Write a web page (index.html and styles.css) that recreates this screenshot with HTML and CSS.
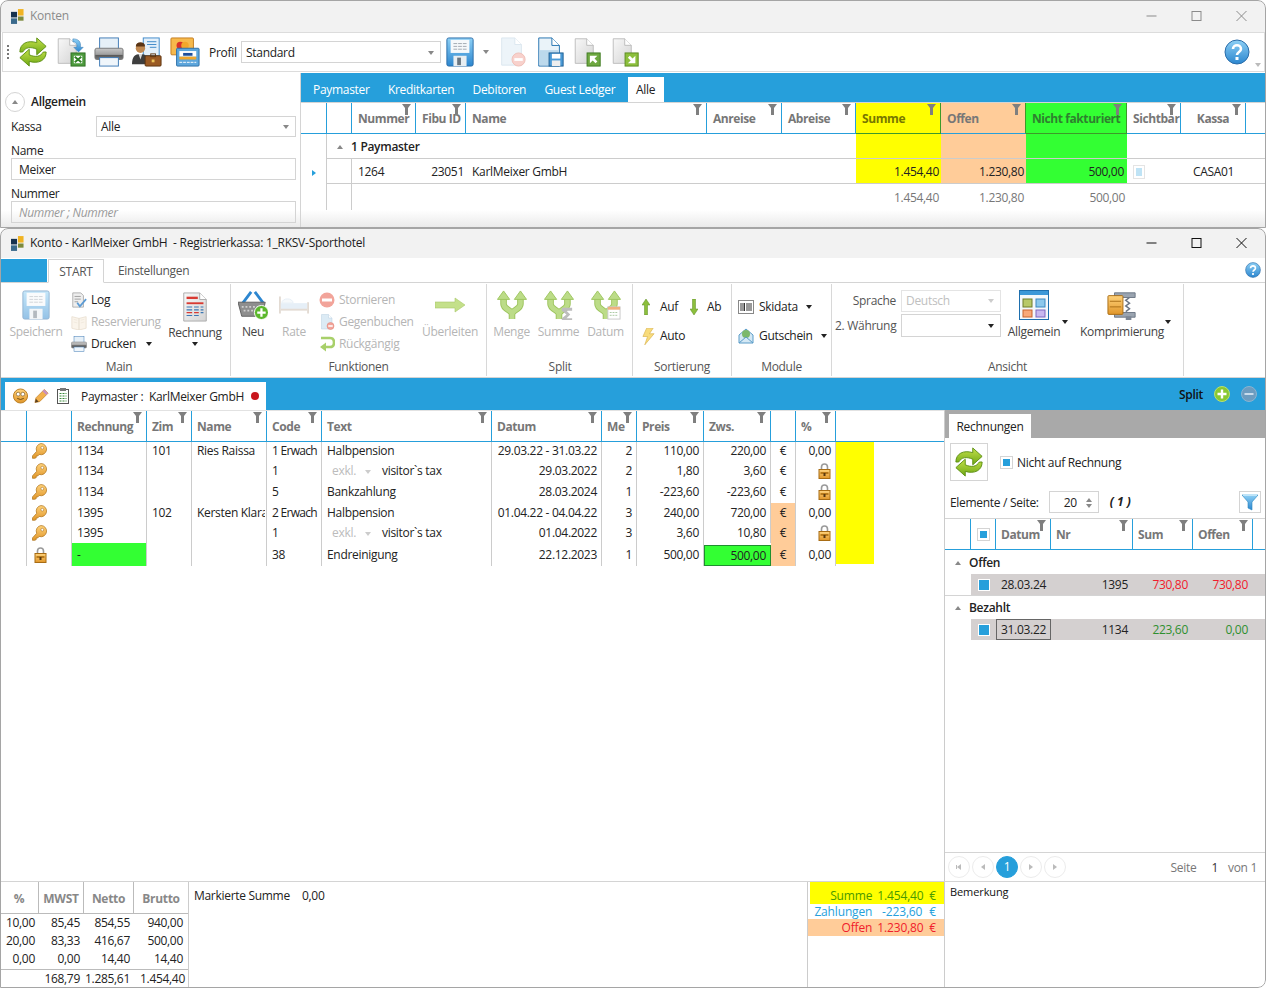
FILE: index.html
```html
<!DOCTYPE html>
<html lang="de">
<head>
<meta charset="utf-8">
<title>Konten</title>
<link rel="stylesheet" href="styles.css">
</head>
<body>
<svg class="defs" aria-hidden="true">
  <defs>
    <linearGradient id="g-green" x1="0" y1="0" x2="0" y2="1"><stop offset="0" stop-color="#c4e04a"/><stop offset="1" stop-color="#6ea815"/></linearGradient>
    <linearGradient id="g-page" x1="0" y1="0" x2="1" y2="1"><stop offset="0" stop-color="#f8f8f8"/><stop offset="1" stop-color="#d4d4d4"/></linearGradient>
    <linearGradient id="g-blue" x1="0" y1="0" x2="0" y2="1"><stop offset="0" stop-color="#8ed0f5"/><stop offset="1" stop-color="#2b86cf"/></linearGradient>
    <linearGradient id="g-gold" x1="0" y1="0" x2="0" y2="1"><stop offset="0" stop-color="#ffd27a"/><stop offset="1" stop-color="#e0962a"/></linearGradient>
    <linearGradient id="g-body" x1="0" y1="0" x2="0" y2="1"><stop offset="0" stop-color="#c8c8c8"/><stop offset=".55" stop-color="#a0a0a0"/><stop offset=".6" stop-color="#585858"/><stop offset="1" stop-color="#7a7a7a"/></linearGradient>
    <symbol id="logo" viewBox="0 0 14 16"><rect x="7.500" y="0" width="6" height="7" fill="#f0b323"/><rect x="0" y="3" width="6.500" height="6" fill="#16324f"/><rect x="7.500" y="8" width="6" height="4.500" fill="#7d8a3c"/><rect x="0" y="10" width="6.500" height="6" fill="#3a6a8c"/></symbol>
    <symbol id="refresh" viewBox="1 0 30 32"><path d="M2 16C2 7 10 3 20 6V1l10 9-10 9v-6C13 10 8 11 5 16Z" fill="url(#g-green)" stroke="#5c8f12"/><path d="M30 16c0 9-8 13-18 10v5L2 22l10-9v6c7 3 12 2 15-3Z" fill="url(#g-green)" stroke="#5c8f12"/></symbol>
    <symbol id="page" viewBox="0 0 32 32"><path d="M5 1h14l8 8v22H5z" fill="url(#g-page)" stroke="#b4b4b4"/><path d="M19 1v8h8" fill="#fff" stroke="#b4b4b4"/></symbol>
    <symbol id="excel" viewBox="0 0 32 32"><use href="#page" width="28" height="30" x="-2"/><path d="M18 2c6 0 9 3 8 9h3l-5 5-5-5h3c1-3-1-6-4-6z" fill="url(#g-blue)" stroke="#3a7fb5" stroke-width=".6"/><rect x="16" y="17" width="15" height="14" fill="#4c9a3c" stroke="#2f6f25"/><rect x="19" y="20" width="9" height="8" fill="#fff"/><path d="M20 21l7 6M27 21l-7 6" stroke="#2f7f25" stroke-width="2"/></symbol>
    <symbol id="printer" viewBox="0 0 32 32"><rect x="6" y="1" width="20" height="12" fill="#e6f0f8" stroke="#3c78b4"/><rect x="1" y="12" width="30" height="12" rx="2" fill="url(#g-body)" stroke="#7a7a7a"/><rect x="6" y="22" width="20" height="9" fill="#f0f6fb" stroke="#3c78b4"/></symbol>
    <symbol id="person" viewBox="0 0 32 32"><rect x="12" y="1" width="17" height="19" fill="#e4f0fa" stroke="#3c88c8"/><path d="M16 5h10M16 8h10M19 11h7" stroke="#3c88c8"/><circle cx="9" cy="12" r="5" fill="#c08850"/><path d="M4 10c0-6 10-6 10 0z" fill="#5a3414"/><path d="M0 29c0-8 3-11 9-11s9 3 9 8v3z" fill="#3e3e3e"/><path d="M7 18l2 6 2-6z" fill="#dcdcdc"/><rect x="14" y="20" width="17" height="11" rx="1" fill="#9a5a24" stroke="#5d3410"/><rect x="20" y="18" width="5" height="3" fill="none" stroke="#5d3410"/><rect x="21" y="24" width="3" height="3" fill="#ecc35a"/></symbol>
    <symbol id="cards" viewBox="0 0 32 32"><rect x="1" y="1" width="24" height="18" rx="1" fill="#f6b94c" stroke="#c27b1e"/><circle cx="11" cy="9" r="4" fill="#d8322a"/><circle cx="16" cy="9" r="4" fill="#f2a72b"/><rect x="7" y="12" width="24" height="19" rx="1" fill="#5da6dc" stroke="#2c6ea6"/><rect x="10" y="15" width="18" height="6" fill="#fff"/><rect x="14" y="17" width="10" height="3" fill="#1e4f9c"/><rect x="10" y="21" width="18" height="3" fill="#f2a72b"/><path d="M10 27h18" stroke="#fff" stroke-dasharray="3 1"/></symbol>
    <symbol id="floppy" viewBox="0 0 32 32"><path d="M2 3q0-2 2-2h24q2 0 2 2v26q0 2-2 2H4q-2 0-2-2z" fill="url(#g-blue)" stroke="#2a6ca8"/><rect x="6" y="3" width="20" height="14" fill="#f6f9fb"/><path d="M9 7h14M9 10h14M9 13h14" stroke="#a0a8b0" stroke-dasharray="4 1"/><rect x="9" y="20" width="14" height="11" fill="#e8eef2"/><rect x="13" y="22" width="4" height="8" fill="#6a7680"/></symbol>
    <symbol id="doc-minus" viewBox="0 0 32 32"><path d="M5 1h14l7 7v22H5z" fill="#dcebf5" stroke="#b9cfe0"/><path d="M19 1v7h7" fill="#fff" stroke="#b9cfe0"/><circle cx="23" cy="24" r="7" fill="#f2a49a" stroke="#e08070"/><rect x="18.500" y="22.500" width="9" height="3" fill="#fff"/></symbol>
    <symbol id="doc-save" viewBox="0 0 32 32"><path d="M4 1h14l8 8v22H4z" fill="#eaf3f9" stroke="#1e6fae"/><path d="M18 1v8h8" fill="#fff" stroke="#1e6fae"/><rect x="5" y="14" width="20" height="16" fill="#bcd9ec"/><rect x="15" y="17" width="15" height="14" fill="#4a9ad6" stroke="#1f5f92"/><rect x="18" y="18" width="9" height="5" fill="#fff"/><rect x="18" y="25" width="9" height="6" fill="#eee"/></symbol>
    <symbol id="doc-in" viewBox="0 0 32 32"><use href="#page" width="28" height="30" x="-2"/><rect x="15" y="17" width="14" height="14" fill="#6ea840" stroke="#3f7a20"/><path d="M18 28v-8h8l-3 3 3 3-2 2-3-3z" fill="#fff"/></symbol>
    <symbol id="doc-out" viewBox="0 0 32 32"><use href="#page" width="28" height="30" x="-2"/><rect x="15" y="17" width="14" height="14" fill="#8cbf3c" stroke="#5a8a20"/><path d="M26 28v-8l-3 3-3-3-2 2 3 3-3 3z" fill="#fff"/></symbol>
    <symbol id="help" viewBox="0 0 26 26"><circle cx="13" cy="13" r="12" fill="url(#g-blue)" stroke="#2a6ca8"/><path d="M9 10c0-5 8-5 8 0 0 3-4 3-4 6" fill="none" stroke="#fff" stroke-width="2.600"/><rect x="11.500" y="18" width="3" height="3" fill="#fff"/></symbol>
    <symbol id="funnel" viewBox="0 0 9 11"><path d="M0 0h9L6 4v7H3V4z" fill="#7f7f7f"/></symbol>
    <symbol id="log" viewBox="0 0 18 18"><path d="M2 1h9l3 3v13H2z" fill="#eee" stroke="#aaa"/><path d="M4 5h7M4 8h7M4 11h4" stroke="#999"/><path d="M7 12l3 4 7-8" fill="none" stroke="#5b9bd5" stroke-width="2"/></symbol>
    <symbol id="book" viewBox="0 0 18 18"><path d="M1 3l8 2 8-2v13l-8 2-8-2z" fill="#f6ead8" stroke="#d8c4a8"/><path d="M9 5v13" stroke="#c8b498"/><path d="M3 6l4 1M3 9l4 1M11 7l4-1M11 10l4-1" stroke="#e4d4bc"/></symbol>
    <symbol id="invoice" viewBox="0 0 28 32"><path d="M2 1h17l7 7v23H2z" fill="url(#g-page)" stroke="#aaa"/><path d="M19 1v7h7" fill="#fff" stroke="#aaa"/><rect x="5" y="5" width="12" height="2.500" fill="#d83a32"/><rect x="5" y="11" width="18" height="2" fill="#d83a32"/><path d="M5 16h6M13 16h5M20 16h3M5 19h6M13 19h5M20 19h3" stroke="#3c78b4" stroke-width="1.200"/><path d="M5 22h6M13 22h5" stroke="#d83a32" stroke-width="1.200"/><path d="M20 22h3M5 25h6M13 25h5" stroke="#3c78b4" stroke-width="1.200"/></symbol>
    <symbol id="basket" viewBox="0 0 32 32"><path d="M5 14L14 2M27 14L18 2" stroke="#2c86d0" stroke-width="3" fill="none"/><path d="M0 13h29l-3 15H4z" fill="#8e8e8e" stroke="#5e5e5e"/><path d="M4 18h22M6 22h18" stroke="#d0d0d0" stroke-dasharray="2 2" stroke-width="2"/><circle cx="25" cy="24" r="7.500" fill="#5cb82c" stroke="#fff"/><path d="M25 19.500v9M20.500 24h9" stroke="#fff" stroke-width="2.400"/></symbol>
    <symbol id="bed" viewBox="0 0 32 20"><path d="M1 1v18M31 7v12" stroke="#c9b8a8" stroke-width="2"/><path d="M2 8h28v7H2z" fill="#cfe0f0"/><path d="M3 8c0-6 12-6 12 0z" fill="#eef4f8" stroke="#cfe0f0"/><path d="M2 15h28" stroke="#c9b8a8" stroke-width="2"/></symbol>
    <symbol id="stop" viewBox="0 0 16 16"><circle cx="8" cy="8" r="7.500" fill="#f2a49a"/><rect x="3" y="6.500" width="10" height="3" fill="#fff"/></symbol>
    <symbol id="undo" viewBox="0 0 16 16"><path d="M2 2h9q4 0 4 4.500T11 11H6" fill="none" stroke="#a8d06a" stroke-width="2.600"/><path d="M7 6.500L1 11l6 4.500z" fill="#a8d06a"/></symbol>
    <symbol id="right" viewBox="0 0 30 14"><path d="M0 4h20V0l10 7-10 7v-4H0z" fill="#c4e08a" stroke="#a8c86a" stroke-width=".6"/></symbol>
    <symbol id="fork" viewBox="0 0 32 32"><path d="M7 9v6c0 6 9 6 9 11v5M25 9v6c0 6-9 6-9 11v5" fill="none" stroke="#9cc45c" stroke-width="7"/><path d="M7 9v6c0 6 9 6 9 11v5M25 9v6c0 6-9 6-9 11v5" fill="none" stroke="#bcdc88" stroke-width="5"/><path d="M.500 10L7 1l6.500 9zM18.500 10L25 1l6.500 9z" fill="#bcdc88" stroke="#9cc45c"/></symbol>
    <symbol id="up" viewBox="0 0 8 16"><path d="M4 0l4 6H5.500v10h-3V6H0z" fill="#8cbf3c" stroke="#5a8a20" stroke-width=".5"/></symbol>
    <symbol id="down" viewBox="0 0 8 16"><path d="M4 16l4-6H5.500V0h-3v10H0z" fill="#8cbf3c" stroke="#5a8a20" stroke-width=".5"/></symbol>
    <symbol id="bolt" viewBox="0 0 14 18"><path d="M5 0h7L8 6h5L3 18l3-9H1z" fill="#f8dc7c" stroke="#d8b24c" stroke-width=".7"/></symbol>
    <symbol id="barcode" viewBox="0 0 16 16"><rect x=".500" y="1.500" width="15" height="13" fill="#fff" stroke="#888"/><path d="M3 4v8M5 4v8M6.500 4v8M9 4v8M11 4v8M13 4v8" stroke="#333"/></symbol>
    <symbol id="mail" viewBox="0 0 16 16"><path d="M1 7l7-6 7 6v8H1z" fill="#d4e8f4" stroke="#5a9cc8"/><circle cx="8" cy="6" r="4" fill="#7cb86a"/><path d="M1 15l7-6 7 6" fill="none" stroke="#5a9cc8"/></symbol>
    <symbol id="layout" viewBox="0 0 30 30"><rect x=".500" y=".500" width="29" height="29" fill="#f4f8fb" stroke="#1e6fae"/><rect x="1" y="1" width="28" height="4" fill="#3c98d8"/><rect x="4" y="9" width="9" height="8" fill="#b8c868" stroke="#6e7c2c"/><rect x="17" y="9" width="9" height="8" fill="#8cc8ec" stroke="#3c88c0"/><rect x="4" y="20" width="9" height="7" fill="#f8a878" stroke="#c8642c"/><rect x="17" y="20" width="9" height="7" fill="#c8b8f0" stroke="#7c68c0"/></symbol>
    <symbol id="clamp" viewBox="0 0 32 32"><path d="M8 3h22v5H8zM8 24h22v5H8z" fill="#9aa4b0" stroke="#6c7684"/><path d="M24 8l-4 3 4 3-4 3 4 3-4 3" fill="none" stroke="#6c7684" stroke-width="1.600"/><rect x="1" y="6" width="16" height="20" rx="1" fill="url(#g-gold)" stroke="#a86c14"/><path d="M3 12h12M3 18h12" stroke="#a86c14"/><rect x="20" y="28" width="6" height="4" fill="#7c8694"/></symbol>
    <symbol id="smiley" viewBox="0 0 16 16"><circle cx="8" cy="8" r="7.500" fill="url(#g-gold)" stroke="#b87a1c"/><circle cx="5.500" cy="6" r="2" fill="#fff" stroke="#6a4a10" stroke-width=".6"/><circle cx="10.500" cy="6" r="2" fill="#fff" stroke="#6a4a10" stroke-width=".6"/><path d="M4.500 10.500q3.500 2.500 7 0" fill="none" stroke="#6a4a10"/></symbol>
    <symbol id="pencil" viewBox="0 0 16 16"><path d="M1 15l1-5L11 1l4 4-9 9z" fill="#f2b04c" stroke="#c07c20" stroke-width=".7"/><path d="M11 1l4 4-2 2-4-4z" fill="#c890c0"/><path d="M1 15l1-4 3 3z" fill="#5a4020"/></symbol>
    <symbol id="clip" viewBox="0 0 12 16"><rect x=".500" y="1.500" width="11" height="14" fill="#fff" stroke="#555"/><rect x="3" y="0" width="6" height="3" fill="#777"/><path d="M2.500 5.500h7M2.500 8h7M2.500 10.500h7M2.500 13h7" stroke="#3a8a3a" stroke-dasharray="2 1"/></symbol>
    <symbol id="key" viewBox="0 0 16 16"><path d="M9.500 0a6 6 0 1 1-1.800 11.700L6 13.400H4.500V15L3 15.800H.500v-2.600L5 8.300A6 6 0 0 1 9.500 0z" fill="url(#g-gold)" stroke="#a86c14" stroke-width=".7"/><circle cx="11" cy="4.500" r="1.500" fill="#fff" stroke="#a86c14" stroke-width=".6"/></symbol>
    <symbol id="lock" viewBox="0 0 12 16"><path d="M3 7V4q0-3 3-3t3 3v3" fill="none" stroke="#9a9a9a" stroke-width="1.600"/><rect x=".500" y="6.500" width="11" height="9" fill="url(#g-gold)" stroke="#a86c14"/><rect x="2" y="9" width="8" height="2" fill="#b87a1c"/><rect x="5" y="10" width="2" height="3" fill="#5a3a10"/></symbol>
    <symbol id="filter" viewBox="0 0 16 18"><path d="M0 2h16L10 9v8l-4-2V9z" fill="url(#g-blue)" stroke="#2a86c0" stroke-width=".6"/><path d="M1 2h14" stroke="#bfe4f8" stroke-width="2"/></symbol>
    <symbol id="plus" viewBox="0 0 16 16"><circle cx="8" cy="8" r="7.500" fill="#8ac832" stroke="#b8e070"/><path d="M8 3.500v9M3.500 8h9" stroke="#fff" stroke-width="2.400"/></symbol>
    <symbol id="minus" viewBox="0 0 16 16"><circle cx="8" cy="8" r="7.500" fill="#6c9cc0" stroke="#8ab4d0"/><rect x="3.500" y="7" width="9" height="2" fill="#c8dcec"/></symbol>
  </defs>
</svg>

<section class="win win-back">
  <header class="titlebar inactive">
    <svg class="logo"><use href="#logo"/></svg>
    <span class="title">Konten</span>
    <div class="winbtns">
      <svg class="wb" viewBox="0 0 10 10"><path d="M0 5h10"/></svg>
      <svg class="wb" viewBox="0 0 10 10"><rect x=".500" y=".500" width="9" height="9"/></svg>
      <svg class="wb" viewBox="0 0 10 10"><path d="M0 0l10 10M10 0L0 10"/></svg>
    </div>
  </header>
  <div class="toolbar">
    <span class="grip"></span>
    <svg class="tb-ic"><use href="#refresh"/></svg>
    <svg class="tb-ic"><use href="#excel"/></svg>
    <svg class="tb-ic"><use href="#printer"/></svg>
    <svg class="tb-ic"><use href="#person"/></svg>
    <svg class="tb-ic"><use href="#cards"/></svg>
    <span class="tb-label">Profil</span>
    <div class="combo tb-combo"><span>Standard</span><i class="caret grey"></i></div>
    <svg class="tb-ic tb-save"><use href="#floppy"/></svg>
    <i class="caret grey"></i>
    <svg class="tb-ic dim"><use href="#doc-minus"/></svg>
    <svg class="tb-ic"><use href="#doc-save"/></svg>
    <svg class="tb-ic"><use href="#doc-in"/></svg>
    <svg class="tb-ic"><use href="#doc-out"/></svg>
    <svg class="tb-help"><use href="#help"/></svg>
    <i class="caret tiny"></i>
  </div>
  <div class="back-body">
    <aside class="filters">
      <div class="section"><span class="circle"><i class="tri-up"></i></span><span class="sec-title">Allgemein</span></div>
      <div class="kassa"><span class="kassa-l">Kassa</span><div class="combo grow"><span>Alle</span><i class="caret grey"></i></div></div>
      <label class="f-label">Name</label>
      <div class="input">Meixer</div>
      <label class="f-label f-label-b">Nummer</label>
      <div class="input ph">Nummer ; Nummer</div>
    </aside>
    <div class="accounts">
      <nav class="bluetabs">
        <span class="bt">Paymaster</span>
        <span class="bt">Kreditkarten</span>
        <span class="bt">Debitoren</span>
        <span class="bt">Guest Ledger</span>
        <span class="bt on">Alle</span>
      </nav>
      <div class="grid kgrid">
        <div class="h"></div>
        <div class="h"></div>
        <div class="h">Nummer<svg class="fn"><use href="#funnel"/></svg></div>
        <div class="h">Fibu ID<svg class="fn"><use href="#funnel"/></svg></div>
        <div class="h">Name<svg class="fn"><use href="#funnel"/></svg></div>
        <div class="h">Anreise<svg class="fn"><use href="#funnel"/></svg></div>
        <div class="h">Abreise<svg class="fn"><use href="#funnel"/></svg></div>
        <div class="h hy">Summe<svg class="fn"><use href="#funnel"/></svg></div>
        <div class="h ho">Offen<svg class="fn"><use href="#funnel"/></svg></div>
        <div class="h hg">Nicht fakturiert<svg class="fn"><use href="#funnel"/></svg></div>
        <div class="h">Sichtbar<svg class="fn"><use href="#funnel"/></svg></div>
        <div class="h hc">Kassa<svg class="fn"><use href="#funnel"/></svg></div>
        <div class="h none"></div>

        <div class="c bl"></div>
        <div class="c grp-k span6"><i class="tri-up"></i><b>1 Paymaster</b></div>
        <div class="c yellow lb"></div>
        <div class="c orange lb"></div>
        <div class="c green lb"></div>
        <div class="c none lb span3"></div>

        <div class="c bl ctr"><i class="tri-right"></i></div>
        <div class="c bl lb"></div>
        <div class="c lb">1264</div>
        <div class="c lb r">23051</div>
        <div class="c lb">KarlMeixer GmbH</div>
        <div class="c lb"></div>
        <div class="c lb"></div>
        <div class="c yellow r lb">1.454,40</div>
        <div class="c orange r lb">1.230,80</div>
        <div class="c green r lb">500,00</div>
        <div class="c lb"><span class="vis"></span></div>
        <div class="c lb ctr">CASA01</div>
        <div class="c lb"></div>

        <div class="c bl"></div>
        <div class="c bl"></div>
        <div class="c span5"></div>
        <div class="c r sum">1.454,40</div>
        <div class="c r sum">1.230,80</div>
        <div class="c r sum">500,00</div>
        <div class="c span3"></div>
      </div>
    </div>
  </div>
</section>

<section class="win win-front">
  <header class="titlebar">
    <svg class="logo"><use href="#logo"/></svg>
    <span class="title">Konto - KarlMeixer GmbH&nbsp; - Registrierkassa: 1_RKSV-Sporthotel</span>
    <div class="winbtns">
      <svg class="wb" viewBox="0 0 10 10"><path d="M0 5h10"/></svg>
      <svg class="wb" viewBox="0 0 10 10"><rect x=".500" y=".500" width="9" height="9"/></svg>
      <svg class="wb" viewBox="0 0 10 10"><path d="M0 0l10 10M10 0L0 10"/></svg>
    </div>
  </header>
  <div class="rtabs">
    <span class="app"></span>
    <span class="rt on">START</span>
    <span class="rt">Einstellungen</span>
    <svg class="rhelp"><use href="#help"/></svg>
  </div>
  <div class="ribbon">
    <div class="rg rg-main">
      <div class="rc">
        <div class="big b-save dis"><svg class="bi dim"><use href="#floppy"/></svg><span>Speichern</span></div>
        <div class="smalls s-main">
          <div class="sm"><svg class="si"><use href="#log"/></svg><span>Log</span></div>
          <div class="sm dis"><svg class="si dim"><use href="#book"/></svg><span>Reservierung</span></div>
          <div class="sm"><svg class="si"><use href="#printer"/></svg><span>Drucken</span><i class="caret dark ml"></i></div>
        </div>
        <div class="big b-inv"><svg class="bi"><use href="#invoice"/></svg><span>Rechnung</span><i class="caret dark"></i></div>
      </div>
      <div class="rl">Main</div>
    </div>
    <div class="rg rg-fn">
      <div class="rc">
        <div class="big b-neu"><svg class="bi"><use href="#basket"/></svg><span>Neu</span></div>
        <div class="big b-rate dis"><svg class="bi dim"><use href="#bed"/></svg><span>Rate</span></div>
        <div class="smalls s-fn">
          <div class="sm dis"><svg class="si"><use href="#stop"/></svg><span>Stornieren</span></div>
          <div class="sm dis"><svg class="si"><use href="#doc-minus"/></svg><span>Gegenbuchen</span></div>
          <div class="sm dis"><svg class="si"><use href="#undo"/></svg><span>Rückgängig</span></div>
        </div>
        <div class="big b-ub dis"><svg class="bi"><use href="#right"/></svg><span>Überleiten</span></div>
      </div>
      <div class="rl">Funktionen</div>
    </div>
    <div class="rg rg-split">
      <div class="rc">
        <div class="big b-fork dis"><svg class="bi"><use href="#fork"/></svg><span>Menge</span></div>
        <div class="big b-fork dis"><svg class="bi" viewBox="0 0 32 32"><use href="#fork" width="32" height="32"/><path d="M19 19h11v3h-6l4 4-4 4h6v2H19v-2l5-4-5-4z" fill="#bdbdbd"/></svg><span>Summe</span></div>
        <div class="big b-fork dis"><svg class="bi" viewBox="0 0 32 32"><use href="#fork" width="32" height="32"/><rect x="18" y="18" width="13" height="13" fill="#fff" stroke="#c8c8c8"/><rect x="18" y="18" width="13" height="3" fill="#f0b080"/><path d="M20 24h9M20 27h9" stroke="#a8c8a0" stroke-dasharray="2 1"/></svg><span>Datum</span></div>
      </div>
      <div class="rl">Split</div>
    </div>
    <div class="rg rg-sort">
      <div class="rc sort">
        <div class="sort-row"><svg class="arr"><use href="#up"/></svg><span class="sort-t">Auf</span><svg class="arr arr-d"><use href="#down"/></svg><span>Ab</span></div>
        <div class="sort-row"><svg class="bolt"><use href="#bolt"/></svg><span>Auto</span></div>
      </div>
      <div class="rl">Sortierung</div>
    </div>
    <div class="rg rg-mod">
      <div class="rc mod">
        <div class="mod-row"><svg class="si"><use href="#barcode"/></svg><span>Skidata</span><i class="caret dark"></i></div>
        <div class="mod-row"><svg class="si"><use href="#mail"/></svg><span>Gutschein</span><i class="caret dark"></i></div>
      </div>
      <div class="rl">Module</div>
    </div>
    <div class="rg rg-view">
      <div class="rc view">
        <div class="langs">
          <div class="lang"><span class="lang-l">Sprache</span><div class="combo lc dis-c"><span>Deutsch</span><i class="caret pale"></i></div></div>
          <div class="lang"><span class="lang-l">2. Währung</span><div class="combo lc lc2"><span></span><i class="caret dark"></i></div></div>
        </div>
        <div class="big b-all"><svg class="bi"><use href="#layout"/></svg><span>Allgemein</span><i class="caret dark cx"></i></div>
        <div class="big b-komp"><svg class="bi"><use href="#clamp"/></svg><span>Komprimierung</span><i class="caret dark cx"></i></div>
      </div>
      <div class="rl">Ansicht</div>
    </div>
  </div>
  <div class="bluebar">
    <div class="doc-tab">
      <svg class="dt-ic"><use href="#smiley"/></svg>
      <svg class="dt-ic"><use href="#pencil"/></svg>
      <svg class="dt-ic dt-clip"><use href="#clip"/></svg>
      <span class="dt-text">Paymaster :&nbsp; KarlMeixer GmbH</span>
      <i class="dot"></i>
    </div>
    <div class="bar-right">
      <span class="split-l">Split</span>
      <svg class="pm"><use href="#plus"/></svg>
      <svg class="pm pm-m"><use href="#minus"/></svg>
    </div>
  </div>

  <div class="mainrow">
    <div class="grid mgrid">
      <div class="h"></div><div class="h"></div>
      <div class="h">Rechnung<svg class="fn"><use href="#funnel"/></svg></div>
      <div class="h">Zim<svg class="fn"><use href="#funnel"/></svg></div>
      <div class="h">Name<svg class="fn"><use href="#funnel"/></svg></div>
      <div class="h">Code<svg class="fn"><use href="#funnel"/></svg></div>
      <div class="h">Text<svg class="fn"><use href="#funnel"/></svg></div>
      <div class="h">Datum<svg class="fn"><use href="#funnel"/></svg></div>
      <div class="h">Me<svg class="fn"><use href="#funnel"/></svg></div>
      <div class="h">Preis<svg class="fn"><use href="#funnel"/></svg></div>
      <div class="h">Zws.<svg class="fn"><use href="#funnel"/></svg></div>
      <div class="h"></div>
      <div class="h">%<svg class="fn"><use href="#funnel"/></svg></div>
      <div class="h none span2"></div>

      <div class="c bl"></div><div class="c bl"><svg class="key"><use href="#key"/></svg></div><div class="c bl">1134</div><div class="c bl">101</div><div class="c bl">Ries Raissa</div><div class="c bl cod">1 Erwach</div><div class="c bl">Halbpension</div><div class="c bl r">29.03.22 - 31.03.22</div><div class="c bl r">2</div><div class="c bl r">110,00</div><div class="c bl r">220,00</div><div class="c bl ctr">€</div><div class="c bl r">0,00</div><div class="c yellow first"></div><div class="c"></div>

      <div class="c bl"></div><div class="c bl"><svg class="key"><use href="#key"/></svg></div><div class="c bl">1134</div><div class="c bl"></div><div class="c bl"></div><div class="c bl">1</div><div class="c bl"><span class="exkl">exkl.</span><i class="caret pale"></i><span class="vt">visitor`s tax</span></div><div class="c bl r">29.03.2022</div><div class="c bl r">2</div><div class="c bl r">1,80</div><div class="c bl r">3,60</div><div class="c bl ctr">€</div><div class="c bl r"><svg class="lock"><use href="#lock"/></svg></div><div class="c yellow"></div><div class="c"></div>

      <div class="c bl"></div><div class="c bl"><svg class="key"><use href="#key"/></svg></div><div class="c bl">1134</div><div class="c bl"></div><div class="c bl"></div><div class="c bl">5</div><div class="c bl">Bankzahlung</div><div class="c bl r">28.03.2024</div><div class="c bl r">1</div><div class="c bl r">-223,60</div><div class="c bl r">-223,60</div><div class="c bl ctr">€</div><div class="c bl r"><svg class="lock"><use href="#lock"/></svg></div><div class="c yellow"></div><div class="c"></div>

      <div class="c bl"></div><div class="c bl"><svg class="key"><use href="#key"/></svg></div><div class="c bl">1395</div><div class="c bl">102</div><div class="c bl cl"><span class="clip">Kersten Klara</span></div><div class="c bl cod">2 Erwach</div><div class="c bl">Halbpension</div><div class="c bl r">01.04.22 - 04.04.22</div><div class="c bl r">3</div><div class="c bl r">240,00</div><div class="c bl r">720,00</div><div class="c bl ctr orange">€</div><div class="c bl r">0,00</div><div class="c yellow"></div><div class="c"></div>

      <div class="c bl"></div><div class="c bl"><svg class="key"><use href="#key"/></svg></div><div class="c bl">1395</div><div class="c bl"></div><div class="c bl"></div><div class="c bl">1</div><div class="c bl"><span class="exkl">exkl.</span><i class="caret pale"></i><span class="vt">visitor`s tax</span></div><div class="c bl r">01.04.2022</div><div class="c bl r">3</div><div class="c bl r">3,60</div><div class="c bl r">10,80</div><div class="c bl ctr orange">€</div><div class="c bl r"><svg class="lock"><use href="#lock"/></svg></div><div class="c yellow"></div><div class="c"></div>

      <div class="c bl"></div><div class="c bl"><svg class="lock lock-l"><use href="#lock"/></svg></div><div class="c bl green">-</div><div class="c bl"></div><div class="c bl"></div><div class="c bl">38</div><div class="c bl">Endreinigung</div><div class="c bl r">22.12.2023</div><div class="c bl r">1</div><div class="c bl r">500,00</div><div class="c bl r zws-sel">500,00</div><div class="c bl ctr orange">€</div><div class="c bl r">0,00</div><div class="c yellow last"></div><div class="c"></div>
    </div>

    <aside class="side">
      <div class="side-strip"><span class="side-tab">Rechnungen</span></div>
      <div class="side-top">
        <span class="rf-btn"><svg class="rf"><use href="#refresh"/></svg></span>
        <span class="chk"></span>
        <span class="nar">Nicht auf Rechnung</span>
      </div>
      <div class="side-pg">
        <span class="nar">Elemente / Seite:</span>
        <div class="spin"><span>20</span><span class="spin-a"><i class="tri-up"></i><i class="caret grey"></i></span></div>
        <b class="pgn">( 1 )</b>
        <span class="flt"><svg class="flt-i"><use href="#filter"/></svg></span>
      </div>
      <div class="grid sgrid">
        <div class="h"></div>
        <div class="h ctr"><span class="chk"></span></div>
        <div class="h">Datum<svg class="fn"><use href="#funnel"/></svg></div>
        <div class="h">Nr<svg class="fn"><use href="#funnel"/></svg></div>
        <div class="h">Sum<svg class="fn"><use href="#funnel"/></svg></div>
        <div class="h">Offen<svg class="fn"><use href="#funnel"/></svg></div>
        <div class="h none"></div>

        <div class="c grp-s span7"><i class="tri-up"></i><b>Offen</b></div>
        <div class="c"></div>
        <div class="c gr ctr"><span class="chk-w"></span></div>
        <div class="c gr">28.03.24</div>
        <div class="c gr r">1395</div>
        <div class="c gr r red">730,80</div>
        <div class="c gr r red">730,80</div>
        <div class="c gr"></div>

        <div class="c grp-s span7 tl"><i class="tri-up"></i><b>Bezahlt</b></div>
        <div class="c"></div>
        <div class="c gr ctr"><span class="chk-w"></span></div>
        <div class="c gr foc">31.03.22</div>
        <div class="c gr r">1134</div>
        <div class="c gr r dgreen">223,60</div>
        <div class="c gr r dgreen">0,00</div>
        <div class="c gr"></div>
      </div>
      <div class="pager">
        <span class="pb"><i class="pi first-i"></i></span>
        <span class="pb"><i class="pi prev-i"></i></span>
        <span class="pb cur">1</span>
        <span class="pb"><i class="pi next-i"></i></span>
        <span class="pb"><i class="pi last-i"></i></span>
        <span class="pg-s">Seite</span>
        <span class="pg-n">1</span>
        <span class="pg-s">von 1</span>
      </div>
    </aside>
  </div>

  <footer class="foot">
    <div class="grid vat">
      <div class="vh">%</div><div class="vh">MWST</div><div class="vh">Netto</div><div class="vh">Brutto</div>
      <div class="v">10,00</div><div class="v">85,45</div><div class="v">854,55</div><div class="v">940,00</div>
      <div class="v">20,00</div><div class="v">83,33</div><div class="v">416,67</div><div class="v">500,00</div>
      <div class="v">0,00</div><div class="v">0,00</div><div class="v">14,40</div><div class="v">14,40</div>
      <div class="vt-c"></div><div class="vt-c">168,79</div><div class="vt-c">1.285,61</div><div class="vt-c vt-l">1.454,40</div>
    </div>
    <div class="marked"><span class="m-l">Markierte Summe</span><span>0,00</span></div>
    <div class="totals">
      <div class="tot t-sum"><span>Summe</span><span class="amt">1.454,40</span><span class="eur">€</span></div>
      <div class="tot t-pay"><span>Zahlungen</span><span class="amt">-223,60</span><span class="eur">€</span></div>
      <div class="tot t-off"><span>Offen</span><span class="amt">1.230,80</span><span class="eur">€</span></div>
    </div>
    <div class="note">Bemerkung</div>
  </footer>
</section>
</body>
</html>
```
FILE: styles.css
```css
* { box-sizing: border-box; }
html, body { margin: 0; height: 100%; }
body {
  width: 1266px; height: 988px; overflow: hidden; position: relative; background: #fff;
  font: 12px/16px "Open Sans", "Noto Sans", sans-serif; letter-spacing: -.3px; color: #222;
}
.defs { position: absolute; width: 0; height: 0; }
i { display: block; font-style: normal; }

.win { position: absolute; left: 0; width: 1266px; background: #fff; display: flex; flex-direction: column; overflow: hidden; }
.win::after { content: ""; position: absolute; inset: 0; border: 1px solid #a5a5a5; border-radius: inherit; pointer-events: none; }
.win-back { top: 0; height: 228px; border-radius: 8px 8px 0 0; background: linear-gradient(#fff 210px, #e9e9e9 228px); }
.win-front { top: 228px; height: 760px; border-radius: 8px 8px 8px 0; }

.titlebar { height: 30px; flex: none; background: #f2f2f2; display: flex; align-items: center; padding-left: 11px; color: #1c1c1c; }
.win-back .titlebar { height: 32px; }
.title { letter-spacing: -.25px; }
.logo { width: 13px; height: 15px; margin-right: 6px; }
.inactive { color: #8b8b8b; }
.winbtns { margin-left: auto; display: flex; padding-right: 2px; }
.wb { width: 45px; height: 10px; fill: none; stroke: #111; stroke-width: 1; }
.inactive .wb { stroke: #8b8b8b; }

.caret { width: 0; height: 0; border-left: 3.500px solid transparent; border-right: 3.500px solid transparent; border-top: 4px solid #888; flex: none; }
.caret.dark { border-top-color: #222; }
.caret.pale { border-top-color: #ccc; }
.tri-up { width: 0; height: 0; border-left: 3.500px solid transparent; border-right: 3.500px solid transparent; border-bottom: 4px solid #888; flex: none; }
.tri-right { width: 0; height: 0; border-top: 3.500px solid transparent; border-bottom: 3.500px solid transparent; border-left: 4px solid #269fdb; }
.dim { opacity: .5; }

.toolbar { height: 40px; flex: none; margin: 0 1px 1px 2px; border: 1px solid #dcdcdc; display: flex; align-items: center; gap: 8px; padding-left: 4px; position: relative; }
.grip { width: 2px; height: 14px; margin-right: 1px; background: repeating-linear-gradient(#777 0 2px, transparent 2px 4px); }
.tb-ic { width: 30px; height: 30px; }
.tb-label { width: 24px; white-space: nowrap; margin-left: 1px; padding-top: 1px; }
.combo { height: 21px; border: 1px solid #d4d4d4; display: flex; align-items: center; justify-content: space-between; padding: 1px 6px 0 4px; background: #fff; }
.tb-combo { width: 200px; height: 22px; }
.tb-save { margin-left: -4px; }
.tb-help { width: 26px; height: 26px; margin-left: auto; margin-right: 14px; }
.caret.tiny { position: absolute; right: 3px; bottom: 4px; border-top-color: #bbb; }

.back-body { flex: 1; display: flex; min-height: 0; }
.filters { width: 301px; padding: 19px 4px 0 11px; flex: none; border-right: 1px solid #d4d4d4; }
.section { display: flex; align-items: center; margin-left: -6px; height: 20px; }
.circle { width: 20px; height: 20px; border: 1px solid #d4d4d4; border-radius: 50%; display: flex; align-items: center; justify-content: center; margin-right: 6px; }
.sec-title { font-weight: 600; }
.kassa { display: flex; align-items: center; margin-top: 4px; }
.kassa-l { width: 85px; padding-top: 1px; }
.grow { flex: 1; font-weight: 500; }
.f-label { display: block; height: 15px; margin-top: 6px; line-height: 16px; }
.f-label-b { margin-top: 7px; height: 14px; line-height: 14px; }
.input { height: 22px; border: 1px solid #d4d4d4; padding-left: 7px; line-height: 22px; }
.ph { color: #9a9a9a; font-style: italic; }

.accounts { flex: 1; min-width: 0; }
.bluetabs { height: 29px; background: #269fdb; display: flex; align-items: flex-end; padding-left: 12px; color: #fff; }
.bt { height: 25px; line-height: 26px; margin-right: 18.300px; white-space: nowrap; }
.bt.on { background: #fff; color: #222; width: 36px; text-align: center; margin-left: -6px; }

.grid { display: grid; }
.kgrid { grid-template-columns: 26px 25px 64px 50px 241px 75px 74px 85px 85px 101px 54px 65px 1fr; grid-template-rows: 31px 25px 25px 26px; border-top: 1px solid #d4d4d4; }
.mgrid { flex: 1; align-content: start; min-width: 0; grid-template-columns: 27px 45px 75px 45px 75px 55px 170px 110px 35px 67px 67px 25px 40px 38px 1fr; grid-template-rows: 31px 18px 21px 22px 20px 20px 23px; border-top: 1px solid #e2e2e2; }
.sgrid { grid-template-columns: 26px 25px 55px 82px 60px 60px 1fr; grid-template-rows: 31px 24px 21px 24px 21px; border-top: 1px solid #d4d4d4; }

.h { position: relative; border-right: 1px solid #269fdb; border-bottom: 1px solid #269fdb; font-weight: 700; color: #777; padding: 2px 0 0 5px; display: flex; align-items: center; white-space: nowrap; overflow: hidden; letter-spacing: -.42px; }
.h.none { border-right: 0; }
.h.ctr { justify-content: center; padding: 0; }
.hc { justify-content: center; padding: 2px 0 0; }
.hy { background: #ff0; border-color: #3d9a2a; color: #777700; }
.ho { background: #fc9; border-bottom-color: #269fdb; border-right-color: #3d9a2a; }
.hg { background: #3f3; border-color: #3d9a2a; color: #2f7f2f; }
.fn { position: absolute; right: 4px; top: 1px; width: 9px; height: 11px; }
.kgrid .h { padding-left: 6px; }
.kgrid .hc { padding-left: 0; }

.c { display: flex; align-items: center; padding: 1px 4px 0 5px; white-space: nowrap; min-width: 0; overflow: hidden; }
.r { justify-content: flex-end; }
.ctr { justify-content: center; padding: 1px 0 0; }
.bl { border-right: 1px solid #ccc; }
.lb { border-bottom: 1px solid #ccc; }
.kgrid .c { padding-top: 2px; padding-left: 6px; }
.kgrid .ctr { padding-left: 0; }
.kgrid .r { padding-right: 2px; }
.kgrid .green.r { padding-right: 3px; }
.mgrid .c { padding-top: 0; }
.cod { letter-spacing: -.7px; }
.yellow { background: #ff0; }
.orange { background: #fc9; }
.green { background: #3f3; }
.none { background: transparent; }
.span2 { grid-column: span 2; }
.span3 { grid-column: span 3; }
.span5 { grid-column: span 5; }
.span6 { grid-column: span 6; }
.span7 { grid-column: span 7; }
.kgrid .grp-k { gap: 8px; padding-left: 10px; border-bottom: 1px solid #ccc; }
.grp-k b { font-weight: 600; }
.vis { width: 12px; height: 14px; border: 1px solid #e4e4e4; padding: 2px; background: #bfe3f5 content-box; }
.sum { color: #777; font-weight: 500; }

.rtabs { height: 25px; flex: none; display: flex; align-items: flex-end; border-bottom: 1px solid #d4d4d4; position: relative; background: #fff; }
.app { width: 47px; height: 23px; background: #269fdb; align-self: flex-start; margin-top: 1px; }
.rt { height: 24px; line-height: 23px; padding: 0 10px; color: #555; margin-bottom: -1px; }
.rt.on { width: 56px; margin-left: 1px; padding: 0; text-align: center; border: 1px solid #d4d4d4; border-bottom: 1px solid #fff; background: #fff; margin-right: 4px; }
.rhelp { position: absolute; right: 5px; top: 4px; width: 16px; height: 16px; }

.ribbon { height: 95px; flex: none; display: flex; border-bottom: 1px solid #d4d4d4; }
.rg { flex: none; display: flex; flex-direction: column; margin: 1px 0 1px; border-right: 1px solid #d8d8d8; }
.rc { flex: 1; display: flex; min-height: 0; }
.rl { height: 20px; line-height: 22px; text-align: center; color: #555; flex: none; }
.rg-main { width: 231px; padding-left: 8px; }
.rg-fn { width: 256px; }
.rg-split { width: 146px; padding-left: 1px; }
.rg-sort { width: 99px; }
.rg-mod { width: 100px; }
.rg-view { width: 352px; }
.big { display: flex; flex-direction: column; align-items: center; padding-top: 6px; color: #444; position: relative; white-space: nowrap; }
.bi { width: 30px; height: 30px; margin-bottom: 4px; }
.dis { color: #b5b5b5; }
.b-save { width: 56px; }
.b-inv { width: 54px; margin-left: 6px; padding-top: 8px; }
.b-inv .bi { margin-bottom: 3px; }
.b-inv .caret { margin-top: 1px; }
.smalls { display: flex; flex-direction: column; padding-top: 5px; }
.s-main { width: 91px; margin-left: 7px; }
.sm { height: 22px; flex: none; display: flex; align-items: center; gap: 4px; white-space: nowrap; }
.si { width: 16px; height: 16px; flex: none; }
.ml { margin-left: 6px; }
.b-neu { width: 44px; }
.b-rate { width: 38px; }
.s-fn { width: 102px; margin-left: 6px; }
.b-ub { width: 58px; }
.b-fork { width: 47px; }
.sort { flex-direction: column; padding: 15px 0 0 9px; gap: 13px; }
.sort-row { height: 16px; display: flex; align-items: center; gap: 6px; }
.arr { width: 8px; height: 16px; margin-right: 4px; }
.arr-d { margin: 0 3px 0 5px; }
.sort-t { width: 19px; }
.bolt { width: 13px; height: 17px; margin-right: -1px; }
.mod { flex-direction: column; padding: 15px 0 0 6px; gap: 13px; }
.mod-row { height: 16px; display: flex; align-items: center; gap: 5px; }
.mod-row .caret { margin-left: 3px; }
.view { padding-left: 3px; }
.langs { width: 166px; padding-top: 4px; }
.lang { display: flex; align-items: center; justify-content: space-between; height: 25px; }
.lang-l { flex: 1; text-align: right; padding-right: 5px; white-space: nowrap; color: #555; }
.lang:last-child .lang-l { text-align: left; padding: 0; }
.lc { width: 100px; height: 22px; }
.lc2 { height: 23px; }
.dis-c { color: #c0c0c0; border-color: #e4e4e4; }
.b-all { width: 54px; margin-left: 6px; }
.b-komp { width: 84px; margin-left: 19px; }
.cx { position: absolute; right: -7px; top: 36px; }

.bluebar { height: 32px; flex: none; background: #269fdb; display: flex; align-items: flex-end; padding-left: 5px; }
.doc-tab { width: 261px; height: 28px; background: #fff; display: flex; align-items: center; padding-left: 8px; }
.dt-ic { width: 15px; height: 16px; margin-right: 6px; flex: none; }
.dt-clip { width: 12px; margin-left: 2px; margin-right: 12px; }
.dt-text { white-space: nowrap; flex: 1; padding-top: 2px; }
.dot { width: 8px; height: 8px; border-radius: 50%; background: #c8161d; margin-right: 7px; }
.bar-right { margin-left: auto; align-self: center; display: flex; align-items: center; color: #111; padding-right: 9px; }
.split-l { font-weight: 600; margin-right: 11px; padding-top: 2px; }
.pm { width: 16px; height: 16px; }
.pm-m { margin-left: 11px; }

.mainrow { flex: 1; min-height: 0; display: flex; border-bottom: 1px solid #d4d4d4; }
.key { width: 15px; height: 16px; flex: none; }
.lock { width: 13px; height: 16px; flex: none; }
.lock-l { margin-left: 2px; }
.cl { padding-right: 1px; }
.clip { display: block; overflow: hidden; width: 100%; }
.exkl { color: #bcbcbc; margin-left: 5px; }
.c .caret.pale { margin: 2px 0 0 9px; }
.vt { margin-left: 11px; }
.zws-sel { background: #3f3; border: 1px solid #1f8f2f; margin-top: 2px; }
.first { box-shadow: 0 -1px 0 #3d9a2a; }
.last { margin-bottom: 2px; }

.side { width: 322px; flex: none; border-left: 1px solid #ccc; display: flex; flex-direction: column; }
.side-strip { height: 28px; background: #a9a9a9; padding: 4px 0 0 4px; flex: none; }
.side-tab { display: block; width: 82px; height: 24px; background: #fff; line-height: 26px; text-align: center; }
.side-top { display: flex; align-items: center; padding: 5px 0 0 5px; flex: none; }
.rf-btn { width: 38px; height: 38px; border: 1px solid #d4d4d4; display: flex; align-items: center; justify-content: center; margin-right: 12px; }
.rf { width: 32px; height: 30px; }
.nar { padding-top: 2px; }
.chk { width: 13px; height: 13px; border: 1px solid #d4d4d4; padding: 2px; background: #269fdb content-box; margin-right: 4px; flex: none; }
.h .chk { margin: 0; }
.side-pg { display: flex; align-items: center; height: 22px; margin-top: 10px; padding-left: 5px; flex: none; }
.spin { width: 50px; height: 22px; border: 1px solid #d4d4d4; margin-left: 10px; display: flex; align-items: center; padding: 1px 0 0 14px; font-weight: 500; }
.spin-a { display: flex; flex-direction: column; gap: 2px; margin-left: 9px; }
.pgn { margin-left: 11px; font-style: italic; font-weight: 700; letter-spacing: 0; }
.flt { width: 22px; height: 22px; border: 1px solid #d4d4d4; margin-left: auto; margin-right: 5px; display: flex; align-items: center; justify-content: center; }
.flt-i { width: 16px; height: 18px; }
.sgrid { margin: 5px 1px 0 0; flex: none; }
.sgrid .r { padding-right: 5px; }
.grp-s { gap: 8px; padding-left: 10px; }
.grp-s b { font-weight: 600; }
.tl { border-top: 1px solid #d4d4d4; }
.gr { background: #d4d0d0; }
.chk-w { width: 12px; height: 12px; background: #269fdb; border: 1.500px solid #fff; }
.foc { box-shadow: inset 0 0 0 1px #666; }
.red { color: #f01c2c; }
.dgreen { color: #2f8f2f; }
.pager { margin-top: auto; height: 29px; flex: none; border-top: 1px solid #d4d4d4; display: flex; align-items: center; gap: 2px; padding: 0 9px 0 3px; color: #777; }
.pb { width: 22px; height: 22px; border: 1px solid #ececec; border-radius: 50%; display: flex; align-items: center; justify-content: center; }
.pb.cur { background: #269fdb; color: #fff; border-color: #269fdb; font-weight: 500; }
.pi { width: 0; height: 0; border-top: 3px solid transparent; border-bottom: 3px solid transparent; }
.first-i, .prev-i { border-right: 4px solid #bbb; }
.next-i, .last-i { border-left: 4px solid #bbb; }
.first-i { box-shadow: -2px 0 0 -1px #bbb; }
.pb + .pg-s { margin-left: auto; }
.pg-s { padding-top: 2px; }
.pg-n { margin: 0 8px 0 13px; color: #333; padding-top: 2px; }

.foot { height: 106px; flex: none; display: flex; }
.vat { width: 189px; flex: none; border-right: 1px solid #ccc; grid-template-columns: 39px 45px 50px 54px; grid-template-rows: 32px 18px 18px 19px 19px; }
.vh { border-right: 1px solid #bbb; border-bottom: 1px solid #bbb; font-weight: 700; color: #888; display: flex; align-items: center; justify-content: center; padding-top: 3px; }
.vh:nth-child(4) { border-right: 0; }
.v { text-align: right; padding-right: 4px; line-height: 18px; }
.v:nth-child(4n) { padding-right: 5px; }
.vt-c { border-top: 1px solid #bbb; text-align: right; padding-right: 4px; font-weight: 500; line-height: 18px; white-space: nowrap; }
.vt-l { padding-right: 3px; }
.marked { flex: 1; padding: 6px 0 0 5px; display: flex; }
.m-l { width: 108px; font-weight: 500; }
.totals { width: 138px; flex: none; border-left: 1px solid #ccc; border-right: 1px solid #ccc; }
.tot { display: flex; justify-content: flex-end; padding-right: 8px; white-space: nowrap; letter-spacing: -.15px; }
.amt { margin-left: 5px; width: 45px; text-align: right; }
.eur { margin-left: 7px; }
.t-sum { height: 22px; margin-left: 2px; background: #ff0; color: #4a9a00; align-items: flex-end; }
.t-pay { height: 15px; color: #269fdb; align-items: center; }
.t-off { height: 17px; background: #fc9; color: #f01c2c; align-items: center; }
.note { width: 321px; flex: none; padding: 2px 0 0 5px; color: #111; font-weight: 500; font-size: 11px; letter-spacing: -.1px; }
```
